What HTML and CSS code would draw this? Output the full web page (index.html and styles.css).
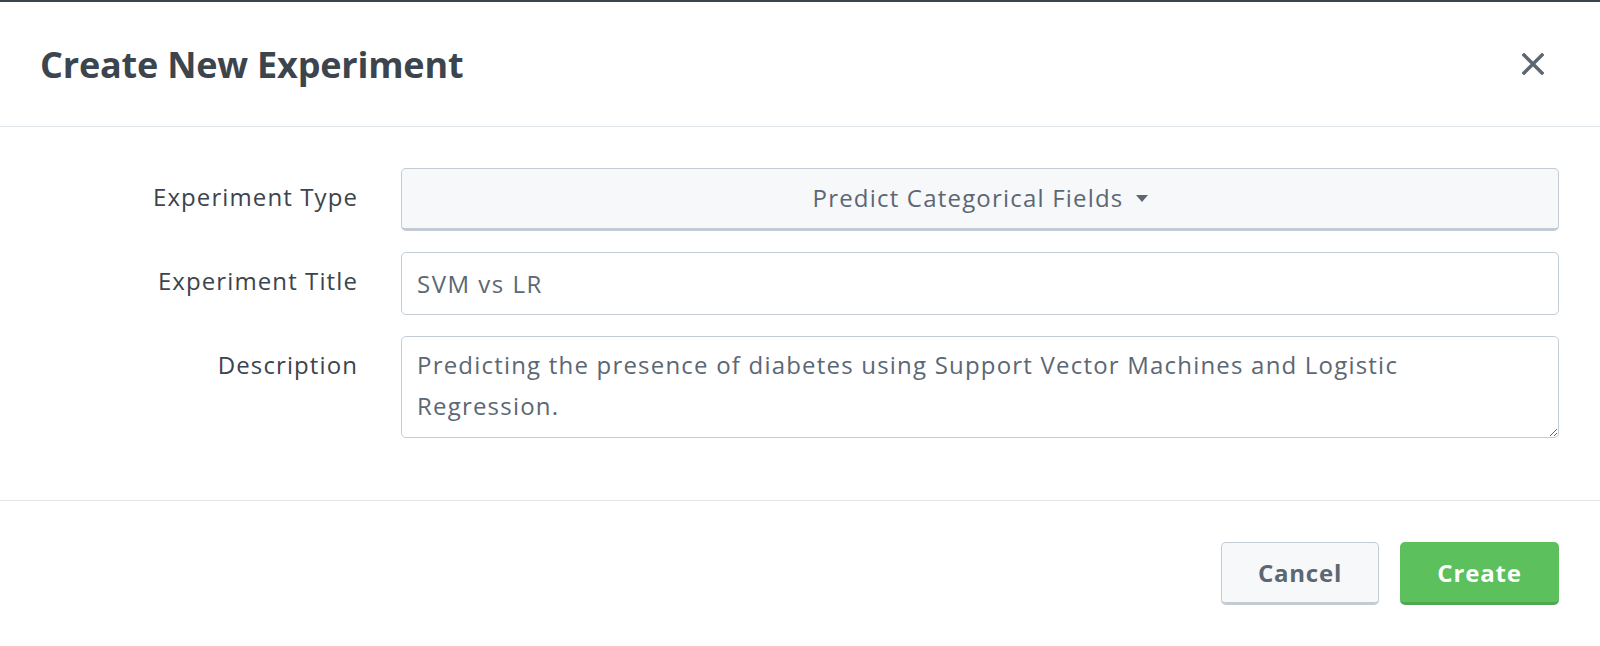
FILE: index.html
```html
<!DOCTYPE html>
<html>
<head>
<meta charset="utf-8">
<link rel="stylesheet" href="styles.css">
</head>
<body>
<div class="modal">
  <div class="modal-header">
    <h1 class="modal-title">Create New Experiment</h1>
    <button class="close" aria-label="Close">
      <svg width="22" height="22" viewBox="0 0 22 22"><path d="M2 2 L20 20 M20 2 L2 20" stroke="#5c6773" stroke-width="3.4" stroke-linecap="square"/></svg>
    </button>
  </div>
  <div class="modal-body">
    <div class="form-grid">
      <label class="form-label">Experiment Type</label>
      <div class="select-btn">Predict Categorical Fields <span class="caret"></span></div>
      <label class="form-label">Experiment Title</label>
      <input class="text-input" type="text" value="SVM vs LR">
      <label class="form-label">Description</label>
      <textarea class="text-area">Predicting the presence of diabetes using Support Vector Machines and Logistic
Regression.</textarea>
    </div>
  </div>
  <div class="modal-footer">
    <button class="btn btn-default">Cancel</button>
    <button class="btn btn-primary">Create</button>
  </div>
</div>
</body>
</html>
```
FILE: styles.css
```css
* { box-sizing: border-box; }
html, body { margin: 0; padding: 0; background: #fff; }
body { font-family: "Open Sans", "Lato", "Liberation Sans", sans-serif; color: #3c444d; }

.modal { border-top: 2px solid #3c444d; width: 1600px; }

.modal-header {
  height: 125px;
  border-bottom: 1.5px solid #e1e6eb;
  display: flex;
  align-items: center;
  justify-content: space-between;
  padding: 0 56px 0 40px;
}
.modal-title {
  margin: 0;
  font-size: 36px;
  font-weight: 700;
  color: #3c444d;
  letter-spacing: -0.2px;
  line-height: 44px;
  padding-top: 2px;
}
.close {
  border: 0; background: none; padding: 0; margin: 0;
  width: 22px; height: 22px; display: block;
}
.close svg { display: block; }

.modal-body { padding: 41px 41px 62px 0; border-bottom: 1.5px solid #e1e6eb; }

.form-grid {
  display: grid;
  grid-template-columns: 358px 1fr;
  column-gap: 43px;
  row-gap: 21px;
}
.form-label {
  text-align: right;
  font-size: 24px;
  letter-spacing: 1.1px;
  line-height: 30px;
  padding-top: 14px;
  color: #3c444d;
}
.select-btn {
  height: 63px;
  border: 1.5px solid #c3cbd4;
  border-bottom-width: 3px;
  border-radius: 5px;
  background: #f7f8fa;
  display: flex;
  align-items: center;
  justify-content: center;
  font-size: 24px;
  letter-spacing: 1.2px;
  color: #5c6773;
  padding-bottom: 2px;
}
.caret {
  display: inline-block;
  width: 0; height: 0;
  border-left: 6px solid transparent;
  border-right: 6px solid transparent;
  border-top: 7px solid #5c6773;
  margin-left: 12px;
  margin-top: 2px;
}
.text-input {
  height: 63px;
  border: 1.5px solid #c3cbd4;
  border-radius: 5px;
  font-family: inherit;
  font-size: 24px;
  letter-spacing: 1.5px;
  color: #5c6773;
  padding: 0 15px;
  outline: none;
  background: #fff;
}
.text-area {
  height: 102px;
  border: 1.5px solid #c3cbd4;
  border-radius: 5px;
  font-family: inherit;
  font-size: 24px;
  letter-spacing: 1.2px;
  line-height: 41px;
  color: #5c6773;
  padding: 7px 15px;
  outline: none;
  resize: vertical;
  background: #fff;
}

.modal-footer {
  display: flex;
  justify-content: flex-end;
  gap: 21px;
  padding: 41px 41px 0 0;
}
.btn {
  height: 63px;
  border-radius: 5px;
  font-family: inherit;
  font-size: 24px;
  font-weight: 700;
  letter-spacing: 0.8px;
  padding: 0;
}
.btn-default {
  width: 158px;
  background: #f7f8fa;
  border: 1.5px solid #c3cbd4;
  border-bottom-width: 3px;
  color: #5c6773;
}
.btn-primary {
  width: 159px;
  background: #5cc05c;
  border: 0;
  border-bottom: 3px solid #4fa84f;
  color: #fff;
}
```
